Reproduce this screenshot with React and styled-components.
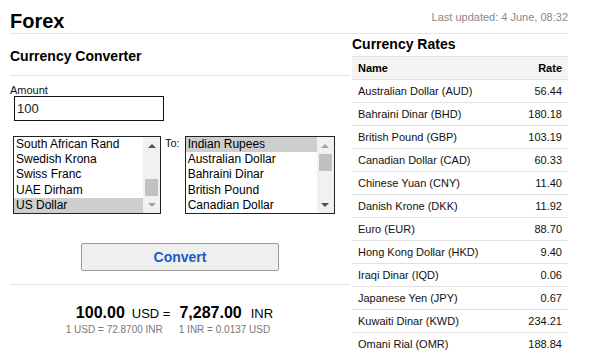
import React from 'react';
import styled, { createGlobalStyle } from 'styled-components';

const GlobalStyle = createGlobalStyle`
    body {
        margin: 0;
        background: #fff;
        font-family: 'Liberation Sans', Arial, sans-serif;
        color: #111;
    }
`;

const fromList = ['South African Rand', 'Swedish Krona', 'Swiss Franc', 'UAE Dirham', 'US Dollar'];
const toList = ['Indian Rupees', 'Australian Dollar', 'Bahraini Dinar', 'British Pound', 'Canadian Dollar'];

const rates = [
    ['Australian Dollar (AUD)', '56.44'],
    ['Bahraini Dinar (BHD)', '180.18'],
    ['British Pound (GBP)', '103.19'],
    ['Canadian Dollar (CAD)', '60.33'],
    ['Chinese Yuan (CNY)', '11.40'],
    ['Danish Krone (DKK)', '11.92'],
    ['Euro (EUR)', '88.70'],
    ['Hong Kong Dollar (HKD)', '9.40'],
    ['Iraqi Dinar (IQD)', '0.06'],
    ['Japanese Yen (JPY)', '0.67'],
    ['Kuwaiti Dinar (KWD)', '234.21'],
    ['Omani Rial (OMR)', '188.84'],
];

const ListBox = ({ items, selected, atTop, width }) => (
    <Box $width={width}>
        <Options>
            {items.map((it) => (
                <Option key={it} $selected={it === selected}>
                    {it}
                </Option>
            ))}
        </Options>
        <ScrollBar>
            <ArrowBtn>
                <Arrow $up $disabled={atTop} />
            </ArrowBtn>
            <Track $atTop={atTop}>
                <Thumb />
            </Track>
            <ArrowBtn>
                <Arrow $disabled={!atTop} />
            </ArrowBtn>
        </ScrollBar>
    </Box>
);

const App = () => {
    return (
        <Page>
            <GlobalStyle />
            <Header>
                <Title>Forex</Title>
                <Updated>Last updated: 4 June, 08:32</Updated>
            </Header>
            <Columns>
                <Converter>
                    <SectionTitle>Currency Converter</SectionTitle>
                    <Label>Amount</Label>
                    <AmountInput defaultValue="100" />
                    <SelectRow>
                        <ListBox items={fromList} selected="US Dollar" width={148} />
                        <ToLabel>To:</ToLabel>
                        <ListBox items={toList} selected="Indian Rupees" atTop width={150} />
                    </SelectRow>
                    <ButtonRow>
                        <ConvertButton>Convert</ConvertButton>
                    </ButtonRow>
                    <Result>
                        <ResultLine>
                            <Big>100.00</Big>
                            <Unit $first>USD =</Unit>
                            <Big>7,287.00</Big>
                            <Unit>INR</Unit>
                        </ResultLine>
                        <SubLine>
                            <span>1 USD = 72.8700 INR</span>
                            <span>1 INR = 0.0137 USD</span>
                        </SubLine>
                    </Result>
                </Converter>
                <Rates>
                    <RatesTitle>Currency Rates</RatesTitle>
                    <Table>
                        <thead>
                            <tr>
                                <th>Name</th>
                                <th className="num">Rate</th>
                            </tr>
                        </thead>
                        <tbody>
                            {rates.map(([name, rate]) => (
                                <tr key={name}>
                                    <td>{name}</td>
                                    <td className="num">{rate}</td>
                                </tr>
                            ))}
                        </tbody>
                    </Table>
                </Rates>
            </Columns>
        </Page>
    );
};

export default App;

const Page = styled.div`
    width: 558px;
    margin-left: 10px;
`;

const Header = styled.header`
    display: flex;
    justify-content: space-between;
    align-items: flex-start;
    height: 34px;
    padding-top: 10px;
    box-sizing: border-box;
    border-bottom: 1px solid #e4e4e4;
`;

const Title = styled.h1`
    margin: 0;
    font-size: 20px;
    line-height: 23px;
    font-weight: bold;
    color: #000;
`;

const Updated = styled.div`
    font-size: 11px;
    line-height: 14px;
    color: #888;
`;

const Columns = styled.div`
    display: flex;
    gap: 2px;
`;

const Converter = styled.section`
    width: 340px;
`;

const SectionTitle = styled.h2`
    margin: 0;
    padding: 13px 0 10px;
    font-size: 14px;
    line-height: 18px;
    color: #000;
    border-bottom: 1px solid #e4e4e4;
`;

const Label = styled.div`
    margin-top: 8px;
    font-size: 11px;
    line-height: 12px;
    color: #111;
`;

const AmountInput = styled.input`
    display: block;
    margin-left: 4px;
    width: 150px;
    height: 25px;
    box-sizing: border-box;
    border: 1px solid #111;
    padding: 0 2px;
    font-family: 'Liberation Sans', Arial, sans-serif;
    font-size: 13px;
    color: #222;
    outline: none;
`;

const SelectRow = styled.div`
    display: flex;
    align-items: flex-start;
    margin-top: 15px;
    padding-left: 3px;
`;

const ToLabel = styled.span`
    font-size: 11px;
    line-height: 13px;
    margin: 1px 5px 0 4px;
    color: #111;
`;

const Box = styled.div`
    display: flex;
    width: ${(p) => p.$width}px;
    height: 78px;
    box-sizing: border-box;
    border: 1px solid #222;
    overflow: hidden;
`;

const Options = styled.div`
    flex: 1;
    overflow: hidden;
`;

const Option = styled.div`
    height: 15.2px;
    line-height: 15px;
    padding-left: 2px;
    font-size: 12px;
    white-space: nowrap;
    color: #000;
    background: ${(p) => (p.$selected ? '#cecece' : 'transparent')};
`;

const ScrollBar = styled.div`
    width: 17px;
    display: flex;
    flex-direction: column;
    background: #f1f1f1;
`;

const ArrowBtn = styled.div`
    height: 17px;
    display: flex;
    align-items: center;
    justify-content: center;
`;

const Arrow = styled.div`
    width: 0;
    height: 0;
    border-left: 4px solid transparent;
    border-right: 4px solid transparent;
    ${(p) => (p.$up ? 'border-bottom' : 'border-top')}: 4px solid
        ${(p) => (p.$disabled ? '#a3a3a3' : '#505050')};
`;

const Track = styled.div`
    flex: 1;
    display: flex;
    flex-direction: column;
    justify-content: ${(p) => (p.$atTop ? 'flex-start' : 'flex-end')};
    padding: 0 2px;
`;

const Thumb = styled.div`
    height: 17px;
    background: #c1c1c1;
`;

const ButtonRow = styled.div`
    display: flex;
    justify-content: center;
    margin-top: 29px;
`;

const ConvertButton = styled.button`
    width: 198px;
    height: 28px;
    background: #efefef;
    border: 1px solid #9c9c9c;
    border-radius: 2px;
    font-family: 'Liberation Sans', Arial, sans-serif;
    font-size: 14px;
    font-weight: bold;
    color: #1b5ac4;
    cursor: pointer;
`;

const Result = styled.div`
    margin-top: 13px;
    border-top: 1px solid #e4e4e4;
    padding-top: 18px;
`;

const ResultLine = styled.div`
    display: flex;
    justify-content: center;
    align-items: baseline;
    padding-right: 11px;
    line-height: 19px;
`;

const Big = styled.span`
    font-size: 16px;
    font-weight: bold;
    color: #000;
`;

const Unit = styled.span`
    font-size: 13px;
    color: #000;
    margin: ${(p) => (p.$first ? '0 9px 0 7px' : '0 0 0 9px')};
`;

const SubLine = styled.div`
    display: flex;
    justify-content: center;
    gap: 16px;
    padding-right: 24px;
    margin-top: 1px;
    font-size: 10px;
    line-height: 12px;
    color: #777;
`;

const Rates = styled.section`
    width: 216px;
`;

const RatesTitle = styled.h2`
    margin: 0 0 3px;
    padding-top: 1px;
    font-size: 14px;
    line-height: 18px;
    color: #000;
`;

const Table = styled.table`
    width: 100%;
    border-collapse: collapse;
    font-size: 11px;
    color: #111;
    th,
    td {
        height: 22px;
        padding: 0 6px;
        text-align: left;
        border-bottom: 1px solid #e0e0e0;
    }
    th {
        background: #f3f3f3;
        font-weight: bold;
        border-top: 1px solid #e0e0e0;
        color: #000;
    }
    .num {
        text-align: right;
    }
`;
